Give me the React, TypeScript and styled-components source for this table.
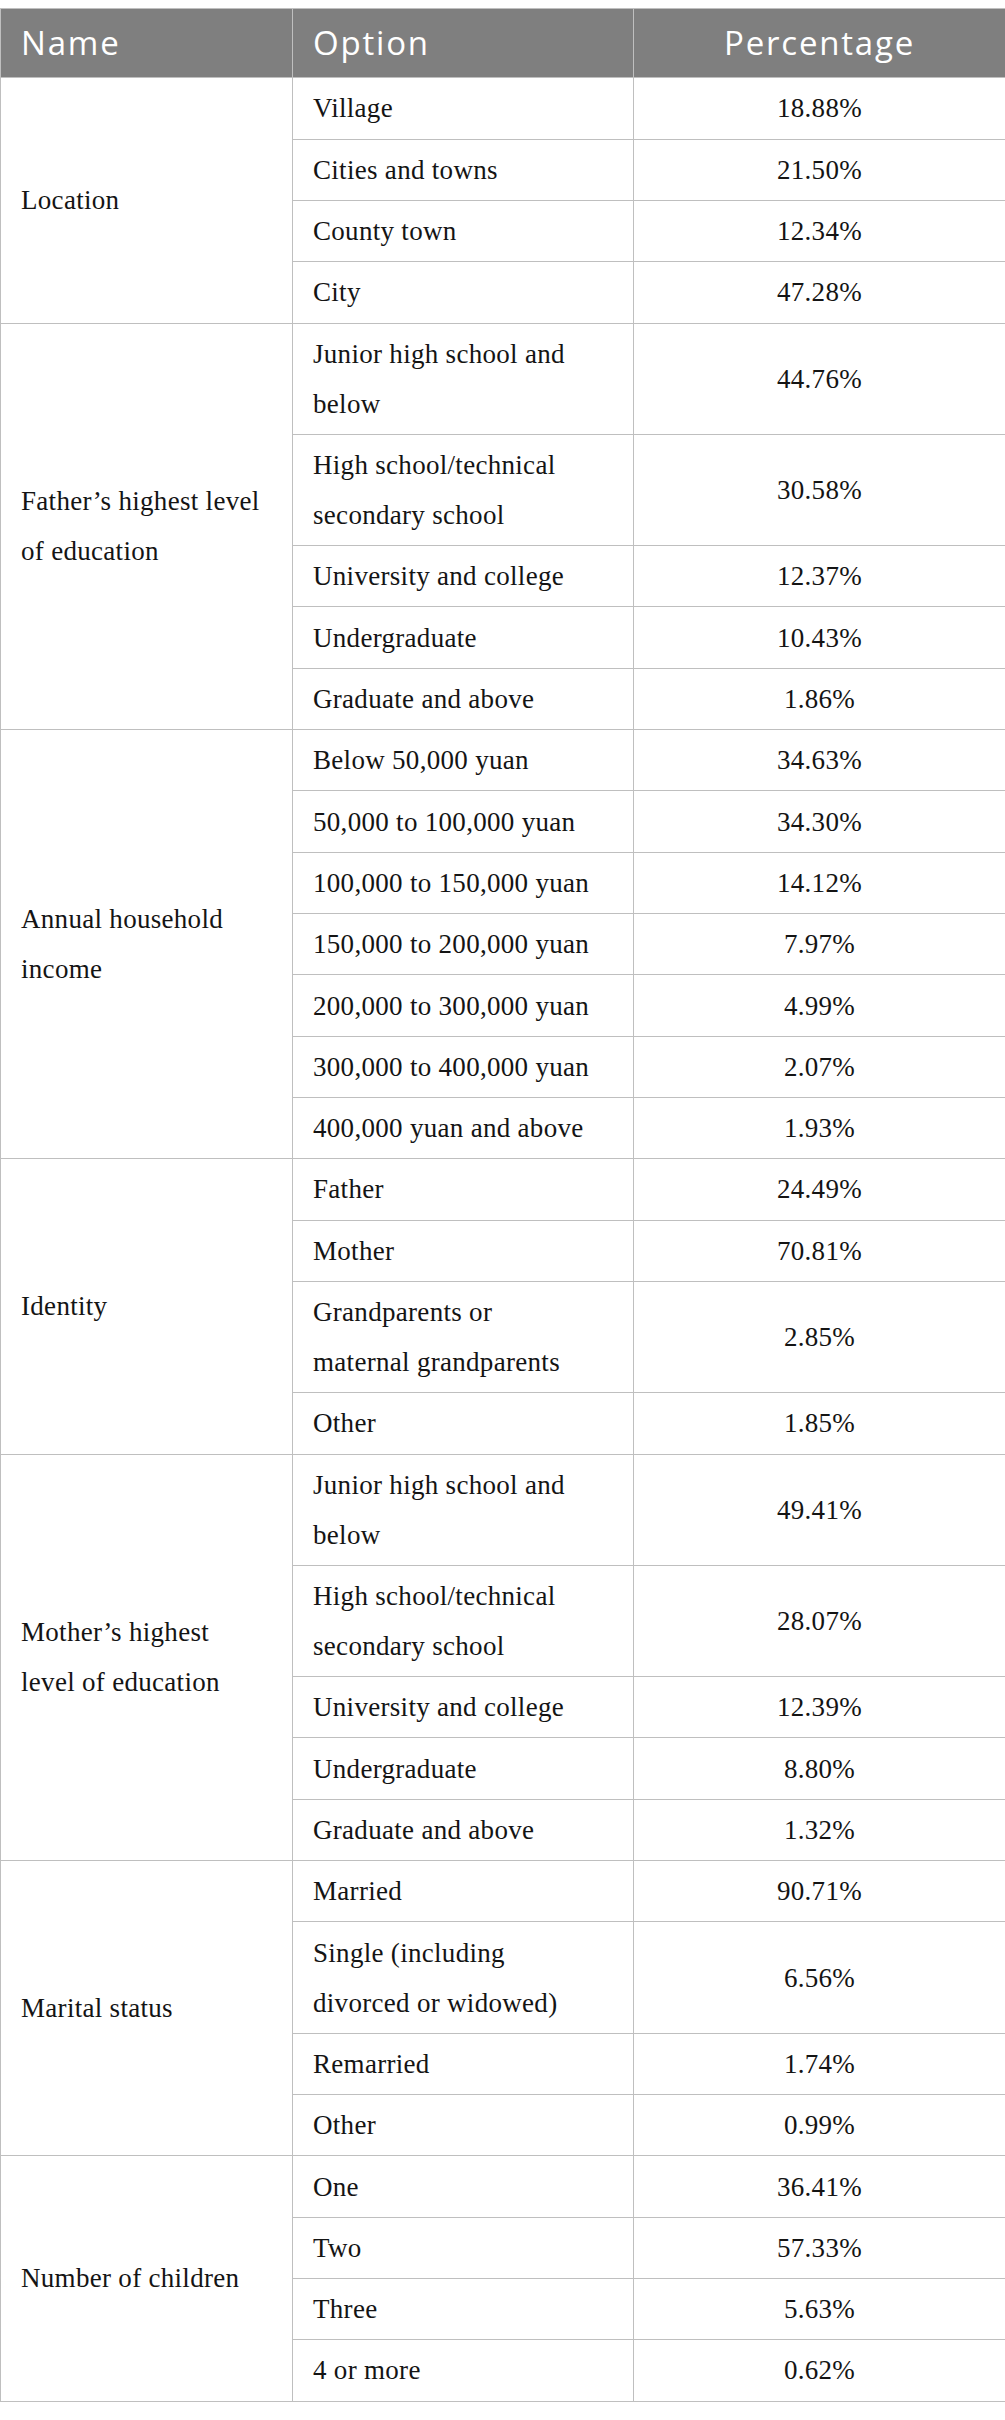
import React from "react";
import styled, { createGlobalStyle } from "styled-components";

const GlobalStyle = createGlobalStyle`
  html, body {
    margin: 0;
    padding: 0;
    background: #ffffff;
  }
  body {
    padding-top: 8px;
    font-family: "Liberation Serif", "Times New Roman", serif;
  }
`;

type Option = { label: string; pct: string };
type Group = { name: string; options: Option[] };

const groups: Group[] = [
  {
    name: "Location",
    options: [
      { label: "Village", pct: "18.88%" },
      { label: "Cities and towns", pct: "21.50%" },
      { label: "County town", pct: "12.34%" },
      { label: "City", pct: "47.28%" },
    ],
  },
  {
    name: "Father\u2019s highest level\nof education",
    options: [
      { label: "Junior high school and\nbelow", pct: "44.76%" },
      { label: "High school/technical\nsecondary school", pct: "30.58%" },
      { label: "University and college", pct: "12.37%" },
      { label: "Undergraduate", pct: "10.43%" },
      { label: "Graduate and above", pct: "1.86%" },
    ],
  },
  {
    name: "Annual household\nincome",
    options: [
      { label: "Below 50,000 yuan", pct: "34.63%" },
      { label: "50,000 to 100,000 yuan", pct: "34.30%" },
      { label: "100,000 to 150,000 yuan", pct: "14.12%" },
      { label: "150,000 to 200,000 yuan", pct: "7.97%" },
      { label: "200,000 to 300,000 yuan", pct: "4.99%" },
      { label: "300,000 to 400,000 yuan", pct: "2.07%" },
      { label: "400,000 yuan and above", pct: "1.93%" },
    ],
  },
  {
    name: "Identity",
    options: [
      { label: "Father", pct: "24.49%" },
      { label: "Mother", pct: "70.81%" },
      { label: "Grandparents or\nmaternal grandparents", pct: "2.85%" },
      { label: "Other", pct: "1.85%" },
    ],
  },
  {
    name: "Mother\u2019s highest\nlevel of education",
    options: [
      { label: "Junior high school and\nbelow", pct: "49.41%" },
      { label: "High school/technical\nsecondary school", pct: "28.07%" },
      { label: "University and college", pct: "12.39%" },
      { label: "Undergraduate", pct: "8.80%" },
      { label: "Graduate and above", pct: "1.32%" },
    ],
  },
  {
    name: "Marital status",
    options: [
      { label: "Married", pct: "90.71%" },
      { label: "Single (including\ndivorced or widowed)", pct: "6.56%" },
      { label: "Remarried", pct: "1.74%" },
      { label: "Other", pct: "0.99%" },
    ],
  },
  {
    name: "Number of children",
    options: [
      { label: "One", pct: "36.41%" },
      { label: "Two", pct: "57.33%" },
      { label: "Three", pct: "5.63%" },
      { label: "4 or more", pct: "0.62%" },
    ],
  },
];

const Table = styled.table`
  width: 1005px;
  border-collapse: collapse;
  table-layout: fixed;
  border: 1px solid #bfbfbf;
`;

const Col = styled.col<{ $w: number }>`
  width: ${(p) => p.$w}px;
`;

const HeadCell = styled.th<{ $align?: "left" | "center" }>`
  background: #7f7f7f;
  color: #ffffff;
  font-family: "Open Sans", "DejaVu Sans", sans-serif;
  font-weight: 400;
  font-size: 33px;
  letter-spacing: 1.8px;
  line-height: 50px;
  padding: 9.15px 20px;
  text-align: ${(p) => p.$align ?? "left"};
  border: 1px solid #bfbfbf;
`;

const BodyCell = styled.td<{ $align?: "left" | "center" }>`
  color: #141414;
  font-family: "Liberation Serif", "Times New Roman", serif;
  font-size: 27px;
  letter-spacing: 0.3px;
  line-height: 50px;
  padding: 5.17px 20px;
  text-align: ${(p) => p.$align ?? "left"};
  vertical-align: middle;
  white-space: pre-line;
  border: 1px solid #bfbfbf;
`;

export default function App() {
  return (
    <>
      <GlobalStyle />
      <Table>
        <colgroup>
          <Col $w={292} />
          <Col $w={341} />
          <Col $w={372} />
        </colgroup>
        <thead>
          <tr>
            <HeadCell>Name</HeadCell>
            <HeadCell>Option</HeadCell>
            <HeadCell $align="center">Percentage</HeadCell>
          </tr>
        </thead>
        <tbody>
          {groups.map((g) =>
            g.options.map((o, i) => (
              <tr key={g.name + o.label}>
                {i === 0 && (
                  <BodyCell rowSpan={g.options.length}>{g.name}</BodyCell>
                )}
                <BodyCell>{o.label}</BodyCell>
                <BodyCell $align="center">{o.pct}</BodyCell>
              </tr>
            ))
          )}
        </tbody>
      </Table>
    </>
  );
}
